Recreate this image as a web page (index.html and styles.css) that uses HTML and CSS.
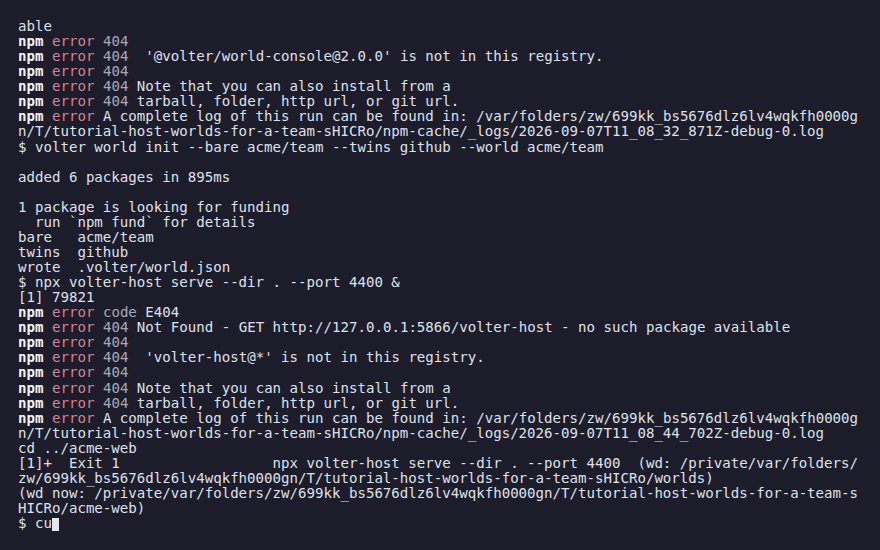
FILE: index.html
```html
<!DOCTYPE html>
<html>
<head>
<meta charset="utf-8">
<link rel="stylesheet" href="styles.css">
</head>
<body>
<pre class="term">able
<b class="npm">npm</b> <span class="err">error</span> <span class="dim">404</span>
<b class="npm">npm</b> <span class="err">error</span> <span class="dim">404</span>  '@volter/world-console@2.0.0' is not in this registry.
<b class="npm">npm</b> <span class="err">error</span> <span class="dim">404</span>
<b class="npm">npm</b> <span class="err">error</span> <span class="dim">404</span> Note that you can also install from a
<b class="npm">npm</b> <span class="err">error</span> <span class="dim">404</span> tarball, folder, http url, or git url.
<b class="npm">npm</b> <span class="err">error</span> A complete log of this run can be found in: /var/folders/zw/699kk_bs5676dlz6lv4wqkfh0000g
n/T/tutorial-host-worlds-for-a-team-sHICRo/npm-cache/_logs/2026-09-07T11_08_32_871Z-debug-0.log
$ volter world init --bare acme/team --twins github --world acme/team

added 6 packages in 895ms

1 package is looking for funding
  run `npm fund` for details
bare   acme/team
twins  github
wrote  .volter/world.json
$ npx volter-host serve --dir . --port 4400 &amp;
[1] 79821
<b class="npm">npm</b> <span class="err">error</span> <span class="dim">code</span> E404
<b class="npm">npm</b> <span class="err">error</span> <span class="dim">404</span> Not Found - GET http://127.0.0.1:5866/volter-host - no such package available
<b class="npm">npm</b> <span class="err">error</span> <span class="dim">404</span>
<b class="npm">npm</b> <span class="err">error</span> <span class="dim">404</span>  'volter-host@*' is not in this registry.
<b class="npm">npm</b> <span class="err">error</span> <span class="dim">404</span>
<b class="npm">npm</b> <span class="err">error</span> <span class="dim">404</span> Note that you can also install from a
<b class="npm">npm</b> <span class="err">error</span> <span class="dim">404</span> tarball, folder, http url, or git url.
<b class="npm">npm</b> <span class="err">error</span> A complete log of this run can be found in: /var/folders/zw/699kk_bs5676dlz6lv4wqkfh0000g
n/T/tutorial-host-worlds-for-a-team-sHICRo/npm-cache/_logs/2026-09-07T11_08_44_702Z-debug-0.log
cd ../acme-web
[1]+  Exit 1                  npx volter-host serve --dir . --port 4400  (wd: /private/var/folders/
zw/699kk_bs5676dlz6lv4wqkfh0000gn/T/tutorial-host-worlds-for-a-team-sHICRo/worlds)
(wd now: /private/var/folders/zw/699kk_bs5676dlz6lv4wqkfh0000gn/T/tutorial-host-worlds-for-a-team-s
HICRo/acme-web)
$ cu<span class="cursor"> </span></pre>
</body>
</html>
```
FILE: styles.css
```css
html, body {
  margin: 0;
  padding: 0;
  background: #1d1c2a;
  width: 880px;
  height: 550px;
  overflow: hidden;
}
.term {
  margin: 0;
  padding: 19px 0 0 18px;
  font-family: "DejaVu Sans Mono", "Liberation Mono", monospace;
  font-size: 14.1px;
  line-height: 15.06px;
  color: #dfe1ea;
  white-space: pre;
}
.npm {
  font-weight: bold;
  color: #f3f4f8;
}
.err {
  color: #d4838f;
}
.dim {
  color: #a7a9ba;
}
.cursor {
  display: inline-block;
  width: 7px;
  height: 13px;
  background: #e3e6f2;
  vertical-align: -2px;
}
```
